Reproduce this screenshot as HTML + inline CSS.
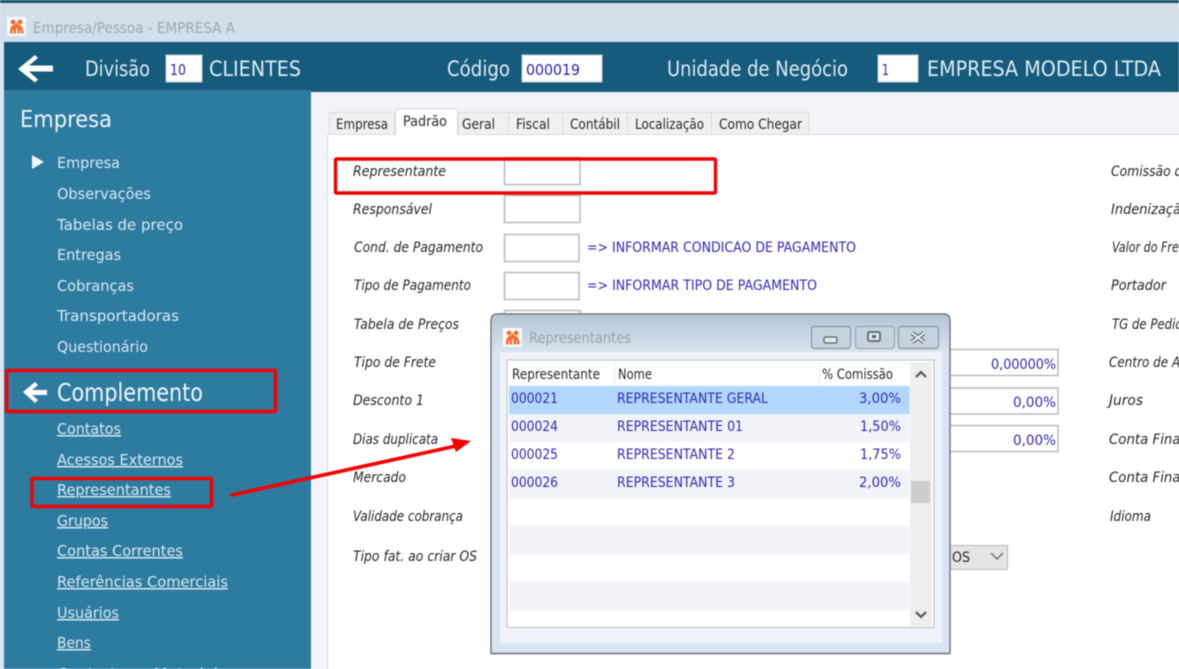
<!DOCTYPE html>
<html lang="pt"><head><meta charset="utf-8"><title>Empresa/Pessoa</title>
<style>
html,body{margin:0;padding:0;width:1179px;height:669px;overflow:hidden;background:#f2f4f9}
svg{display:block;position:absolute;left:0;top:0}
text{font-family:"DejaVu Sans","Liberation Sans",sans-serif;white-space:pre}
#root{filter:blur(.42px)}
.h{font-size:21px;fill:#dcecf4}
.s{font-size:15px;fill:#d9e9f1}
.u{text-decoration:underline}
.t{font-size:14px;fill:#2a2a2a}
.l{font-size:14px;font-style:italic;fill:#262626}
.b{font-size:14px;fill:#3128b8}
.i{font-size:15px;fill:#2a1fb0}
.n{fill:#fff;stroke:#b9b9bd;stroke-width:1.5}
.tab{fill:#f0f0f0;stroke:#dadada}
.red{fill:none;stroke:#f40000;stroke-width:3.4}
</style></head><body>
<svg width="1179" height="669" viewBox="0 0 1179 669" xmlns="http://www.w3.org/2000/svg">
<defs>
<linearGradient id="tg" x1="0" y1="0" x2="0" y2="1"><stop offset="0" stop-color="#d5dee5"/><stop offset="1" stop-color="#cfe0ee"/></linearGradient>
<linearGradient id="dg" x1="0" y1="0" x2="0" y2="1"><stop offset="0" stop-color="#b4c5d3"/><stop offset="1" stop-color="#d7e4f0"/></linearGradient>
<g id="logo"><rect width="19" height="19" fill="#fbfbfb"/><g fill="#f66a2a"><path d="M3 5l3-3 3 3-3 3zM10 5l3-3 3 3-3 3zM6.500 8.500l3-3 3 3-3 3zM3 11l3-3 2.500 2.500-3 3zM10.500 10.500l2.500-2.500 3 3-2.500 2.500z"/><rect x="3" y="12.500" width="2.500" height="4"/><rect x="6.500" y="11" width="2.500" height="5.500"/><rect x="10.500" y="11" width="2.500" height="5.500"/><rect x="14" y="12.500" width="2.500" height="4"/></g></g>
</defs>
<g id="root">
<rect width="1179" height="669" fill="#f2f4f9"/>
<rect y="2" width="1179" height="40" fill="url(#tg)"/>
<rect width="1179" height="3" fill="#1c5470"/>
<rect y="42" width="4" height="627" fill="#d8e5f2"/>
<use href="#logo" x="7" y="17"/>
<text x="33" y="33" font-size="15" fill="#a3a6aa" textLength="202" lengthAdjust="spacingAndGlyphs">Empresa/Pessoa - EMPRESA A</text>

<rect x="4" y="42" width="1175" height="50" fill="#165a7c"/>
<path d="M18 69l17-14 3 3-9 7.500h24v6H29l9 8-3 3z" fill="#fff"/>
<text class="h" x="85" y="76" textLength="65" lengthAdjust="spacingAndGlyphs">Divisão</text>
<rect x="166" y="55" width="36" height="27" fill="#fff" stroke="#c4ccd2"/>
<text class="i" x="170" y="75" textLength="16" lengthAdjust="spacingAndGlyphs">10</text>
<text class="h" x="209" y="76" textLength="92" lengthAdjust="spacingAndGlyphs">CLIENTES</text>
<text class="h" x="447" y="76" textLength="63" lengthAdjust="spacingAndGlyphs">Código</text>
<rect x="522" y="55" width="80" height="27" fill="#fff" stroke="#c4ccd2"/>
<text class="i" x="526" y="75" textLength="54" lengthAdjust="spacingAndGlyphs">000019</text>
<text class="h" x="667" y="76" textLength="181" lengthAdjust="spacingAndGlyphs">Unidade de Negócio</text>
<rect x="878" y="55" width="40" height="27" fill="#fff" stroke="#c4ccd2"/>
<text class="i" x="882" y="75" textLength="7" lengthAdjust="spacingAndGlyphs">1</text>
<text class="h" x="927" y="76" textLength="234" lengthAdjust="spacingAndGlyphs">EMPRESA MODELO LTDA</text>

<rect x="4" y="90" width="307" height="579" fill="#2e7ba0"/>
<text x="20" y="127" font-size="23" fill="#eef6fa" textLength="92" lengthAdjust="spacingAndGlyphs">Empresa</text>
<path d="M32 155l12 7-12 7z" fill="#f4f8fb"/>
<text class="s" x="57" y="168" textLength="63" lengthAdjust="spacingAndGlyphs">Empresa</text>
<text class="s" x="57" y="199" textLength="94" lengthAdjust="spacingAndGlyphs">Observações</text>
<text class="s" x="57" y="230" textLength="126" lengthAdjust="spacingAndGlyphs">Tabelas de preço</text>
<text class="s" x="57" y="260" textLength="64" lengthAdjust="spacingAndGlyphs">Entregas</text>
<text class="s" x="57" y="291" textLength="77" lengthAdjust="spacingAndGlyphs">Cobranças</text>
<text class="s" x="57" y="321" textLength="122" lengthAdjust="spacingAndGlyphs">Transportadoras</text>
<text class="s" x="57" y="352" textLength="91" lengthAdjust="spacingAndGlyphs">Questionário</text>
<path d="M23 392l12-10 3 3-6 5h15v5H32l6 5-3 3z" fill="#fff"/>
<text x="57" y="401" font-size="25" fill="#f0f7fb" textLength="146" lengthAdjust="spacingAndGlyphs">Complemento</text>
<text class="s u" x="57" y="434" textLength="64" lengthAdjust="spacingAndGlyphs">Contatos</text>
<text class="s u" x="57" y="465" textLength="126" lengthAdjust="spacingAndGlyphs">Acessos Externos</text>
<text class="s u" x="57" y="495" textLength="114" lengthAdjust="spacingAndGlyphs">Representantes</text>
<text class="s u" x="57" y="526" textLength="51" lengthAdjust="spacingAndGlyphs">Grupos</text>
<text class="s u" x="57" y="556" textLength="126" lengthAdjust="spacingAndGlyphs">Contas Correntes</text>
<text class="s u" x="57" y="587" textLength="171" lengthAdjust="spacingAndGlyphs">Referências Comerciais</text>
<text class="s u" x="57" y="618" textLength="62" lengthAdjust="spacingAndGlyphs">Usuários</text>
<text class="s u" x="57" y="648" textLength="34" lengthAdjust="spacingAndGlyphs">Bens</text>
<text class="s u" x="57" y="679" textLength="161" lengthAdjust="spacingAndGlyphs">Contratos e Material</text>

<rect x="327.500" y="134.500" width="860" height="540" fill="#fff" stroke="#dcdde2"/>
<rect class="tab" x="329.500" y="112.500" width="65" height="22"/>
<rect class="tab" x="458.500" y="112.500" width="50" height="22"/>
<rect class="tab" x="508.500" y="112.500" width="54" height="22"/>
<rect class="tab" x="562.500" y="112.500" width="65" height="22"/>
<rect class="tab" x="627.500" y="112.500" width="84" height="22"/>
<rect class="tab" x="711.500" y="112.500" width="97" height="22"/>
<path d="M395.500 135v-26h62v26" fill="#fff" stroke="#dadada"/>
<text class="t" x="336" y="129" textLength="52" lengthAdjust="spacingAndGlyphs">Empresa</text>
<text class="t" x="403" y="126" textLength="44" lengthAdjust="spacingAndGlyphs">Padrão</text>
<text class="t" x="462" y="129" textLength="33" lengthAdjust="spacingAndGlyphs">Geral</text>
<text class="t" x="516" y="129" textLength="34" lengthAdjust="spacingAndGlyphs">Fiscal</text>
<text class="t" x="570" y="129" textLength="50" lengthAdjust="spacingAndGlyphs">Contábil</text>
<text class="t" x="635" y="129" textLength="69" lengthAdjust="spacingAndGlyphs">Localização</text>
<text class="t" x="719" y="129" textLength="83" lengthAdjust="spacingAndGlyphs">Como Chegar</text>

<rect class="n" x="504.500" y="157.500" width="75.500" height="27"/>
<rect class="n" x="504.500" y="195.500" width="75.500" height="27"/>
<rect class="n" x="504.500" y="234.500" width="74.500" height="27"/>
<rect class="n" x="504.500" y="272.500" width="74.500" height="27"/>
<rect class="n" x="504.500" y="310.500" width="75.500" height="27"/>
<text class="l" x="353" y="176" textLength="93" lengthAdjust="spacingAndGlyphs">Representante</text>
<text class="l" x="353" y="214" textLength="79" lengthAdjust="spacingAndGlyphs">Responsável</text>
<text class="l" x="354" y="252" textLength="129" lengthAdjust="spacingAndGlyphs">Cond. de Pagamento</text>
<text class="l" x="354" y="290" textLength="117" lengthAdjust="spacingAndGlyphs">Tipo de Pagamento</text>
<text class="l" x="354" y="329" textLength="105" lengthAdjust="spacingAndGlyphs">Tabela de Preços</text>
<text class="l" x="354" y="367" textLength="82" lengthAdjust="spacingAndGlyphs">Tipo de Frete</text>
<text class="l" x="353" y="405" textLength="71" lengthAdjust="spacingAndGlyphs">Desconto 1</text>
<text class="l" x="353" y="444" textLength="85" lengthAdjust="spacingAndGlyphs">Dias duplicata</text>
<text class="l" x="353" y="482" textLength="53" lengthAdjust="spacingAndGlyphs">Mercado</text>
<text class="l" x="353" y="521" textLength="110" lengthAdjust="spacingAndGlyphs">Validade cobrança</text>
<text class="l" x="353" y="561" textLength="124" lengthAdjust="spacingAndGlyphs">Tipo fat. ao criar OS</text>
<text class="b" x="587" y="252" textLength="269" lengthAdjust="spacingAndGlyphs">=&gt; INFORMAR CONDICAO DE PAGAMENTO</text>
<text class="b" x="587" y="290" textLength="230" lengthAdjust="spacingAndGlyphs">=&gt; INFORMAR TIPO DE PAGAMENTO</text>

<rect class="n" x="930.500" y="349.500" width="127.500" height="26"/>
<rect class="n" x="930.500" y="388" width="127.500" height="26"/>
<rect class="n" x="930.500" y="425.500" width="127.500" height="26"/>
<text class="b" x="991" y="369" textLength="65" lengthAdjust="spacingAndGlyphs">0,00000%</text>
<text class="b" x="1013" y="407" textLength="43" lengthAdjust="spacingAndGlyphs">0,00%</text>
<text class="b" x="1013" y="445" textLength="43" lengthAdjust="spacingAndGlyphs">0,00%</text>
<rect x="930.500" y="545.500" width="77" height="24" fill="#e4e4e4" stroke="#b9b9b9"/>
<text class="t" x="952" y="562" textLength="18" lengthAdjust="spacingAndGlyphs">OS</text>
<path d="M991 553l6 6 6-6" fill="none" stroke="#666" stroke-width="1.300"/>

<text class="l" x="1111" y="176" textLength="79" lengthAdjust="spacingAndGlyphs">Comissão de</text>
<text class="l" x="1111" y="214" textLength="78" lengthAdjust="spacingAndGlyphs">Indenização</text>
<text class="l" x="1112" y="252" textLength="78" lengthAdjust="spacingAndGlyphs">Valor do Frete</text>
<text class="l" x="1111" y="290" textLength="55" lengthAdjust="spacingAndGlyphs">Portador</text>
<text class="l" x="1112" y="329" textLength="78" lengthAdjust="spacingAndGlyphs">TG de Pedido</text>
<text class="l" x="1109" y="367" textLength="83" lengthAdjust="spacingAndGlyphs">Centro de Atv</text>
<text class="l" x="1109" y="405" textLength="34" lengthAdjust="spacingAndGlyphs">Juros</text>
<text class="l" x="1109" y="444" textLength="80" lengthAdjust="spacingAndGlyphs">Conta Finan</text>
<text class="l" x="1109" y="482" textLength="80" lengthAdjust="spacingAndGlyphs">Conta Finan</text>
<text class="l" x="1110" y="521" textLength="41" lengthAdjust="spacingAndGlyphs">Idioma</text>

<path d="M491 653.500V321q0-7 7-7h445q7 0 7 7v332.500z" fill="#d8e5f2" stroke="#6d7175" stroke-width="1.400"/>
<path d="M492 352V322q0-7 7-7h443q7 0 7 7v30z" fill="url(#dg)"/>
<rect x="500" y="352" width="442" height="291" fill="#eff3f9"/>
<use href="#logo" x="503" y="328"/>
<text x="529" y="343" font-size="15" fill="#9ca2a8" textLength="102" lengthAdjust="spacingAndGlyphs">Representantes</text>
<rect x="811.500" y="326.500" width="39" height="22" rx="3" fill="#c6d3de" stroke="#7c8b99"/>
<rect x="855.500" y="326.500" width="39" height="22" rx="3" fill="#c6d3de" stroke="#93a1ad"/>
<rect x="898.500" y="326.500" width="40" height="22" rx="3" fill="#c6d3de" stroke="#7c8b99"/>
<rect x="824" y="337" width="13" height="6" rx="1.500" fill="#e4e9ed" stroke="#59636c" stroke-width="1.300"/>
<rect x="868" y="332" width="12" height="9" rx="1.500" fill="#e4e9ed" stroke="#59636c" stroke-width="1.700"/>
<rect x="872" y="335" width="4" height="3" fill="#59636c"/>
<path d="M912 333l12 9M924 333l-12 9" stroke="#59636c" stroke-width="4.400" fill="none"/>
<path d="M912 333l12 9M924 333l-12 9" stroke="#e8edf1" stroke-width="2.200" fill="none"/>

<rect x="507" y="360" width="427" height="267.500" fill="#fff" stroke="#b9bbbf"/>
<rect x="614" y="362" width="1" height="23" fill="#ecedf1"/>
<rect x="819" y="362" width="1" height="23" fill="#ecedf1"/>
<rect x="509" y="386" width="400.500" height="28" fill="#b3d7ff"/>
<rect x="509" y="414" width="400.500" height="28" fill="#f2f3f9"/>
<rect x="509" y="470" width="400.500" height="28" fill="#f2f3f9"/>
<rect x="509" y="526" width="400.500" height="28" fill="#f2f3f9"/>
<rect x="509" y="582" width="400.500" height="28" fill="#f2f3f9"/>
<rect x="910" y="362" width="22" height="264" fill="#eeeeee"/>
<rect x="911" y="481" width="19" height="22" fill="#cdcdcd"/>
<path d="M916 377l5-5 5 5M916 612l5 5 5-5" fill="none" stroke="#555" stroke-width="2.200"/>
<text class="t" x="512" y="379" textLength="88" lengthAdjust="spacingAndGlyphs">Representante</text>
<text class="t" x="618" y="379" textLength="34" lengthAdjust="spacingAndGlyphs">Nome</text>
<text class="t" x="822" y="379" textLength="71" lengthAdjust="spacingAndGlyphs">% Comissão</text>
<text class="b" x="511" y="403" textLength="47" lengthAdjust="spacingAndGlyphs">000021</text>
<text class="b" x="617" y="403" textLength="151" lengthAdjust="spacingAndGlyphs">REPRESENTANTE GERAL</text>
<text class="b" x="859" y="403" textLength="42" lengthAdjust="spacingAndGlyphs">3,00%</text>
<text class="b" x="511" y="431" textLength="47" lengthAdjust="spacingAndGlyphs">000024</text>
<text class="b" x="617" y="431" textLength="126" lengthAdjust="spacingAndGlyphs">REPRESENTANTE 01</text>
<text class="b" x="860" y="431" textLength="41" lengthAdjust="spacingAndGlyphs">1,50%</text>
<text class="b" x="511" y="459" textLength="47" lengthAdjust="spacingAndGlyphs">000025</text>
<text class="b" x="617" y="459" textLength="118" lengthAdjust="spacingAndGlyphs">REPRESENTANTE 2</text>
<text class="b" x="860" y="459" textLength="41" lengthAdjust="spacingAndGlyphs">1,75%</text>
<text class="b" x="511" y="487" textLength="47" lengthAdjust="spacingAndGlyphs">000026</text>
<text class="b" x="617" y="487" textLength="118" lengthAdjust="spacingAndGlyphs">REPRESENTANTE 3</text>
<text class="b" x="859" y="487" textLength="42" lengthAdjust="spacingAndGlyphs">2,00%</text>

<rect class="red" x="335.500" y="159" width="380" height="34" rx="1"/>
<rect class="red" x="6.500" y="370.500" width="269" height="41" rx="1"/>
<rect class="red" x="32" y="478.500" width="179.500" height="28" rx="1"/>
<path d="M232 495L456 446" stroke="#f40000" stroke-width="3.600" stroke-linecap="round"/>
<path d="M471 441L451 438L456 452z" fill="#f40000"/>
</g>
</svg>
</body></html>
